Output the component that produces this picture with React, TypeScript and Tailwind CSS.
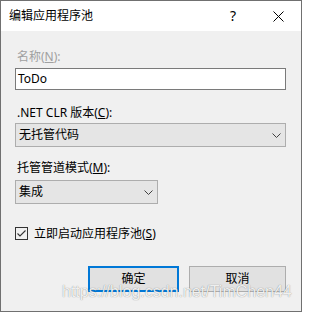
import React from 'react';

const font = "font-['Noto_Sans','Noto_Sans_CJK_SC',sans-serif]";

function Chevron() {
  return (
    <svg width="9" height="5" viewBox="0 0 9 5" className="shrink-0">
      <polyline points="0.5,0.5 4.5,4.5 8.5,0.5" fill="none" stroke="#404040" strokeWidth="1" />
    </svg>
  );
}

function Select({ value, width }: { value: string; width: string }) {
  return (
    <div
      className={`${width} h-[24px] flex items-center justify-between border border-[#adadad] bg-[#e5e5e5] pl-[3px] pr-[4px] text-[12px] leading-[16px] text-black`}
    >
      <span>{value}</span>
      <Chevron />
    </div>
  );
}

export default function App() {
  return (
    <div
      className={`relative flex h-[312px] w-[302px] flex-col border border-[#707070] bg-[#f0f0f0] ${font} text-black`}
    >
      {/* title bar */}
      <div className="flex h-[30px] items-center bg-white pl-[8px] text-[12px] leading-[16px]">
        <span>编辑应用程序池</span>
        <span className="ml-auto mr-[37px] text-[14px] leading-[16px]">?</span>
        <svg width="11" height="11" viewBox="0 0 11 11" className="mr-[17px]">
          <path d="M0.5 0.5 L10.5 10.5 M10.5 0.5 L0.5 10.5" stroke="#000" strokeWidth="1" />
        </svg>
      </div>

      {/* body */}
      <div className="flex flex-1 flex-col pl-[14px] pr-[15px] pt-[18px] text-[12px] leading-[16px]">
        <div className="pl-[2px] text-[#a0a0a0]">
          名称(<span className="underline">N</span>):
        </div>
        <div className="mt-[3px] flex h-[22px] items-center border border-[#7a7a7a] bg-white pl-[2px]">
          ToDo
        </div>

        <div className="mt-[15px] pl-[2px]">
          .NET CLR 版本(<span className="underline">C</span>):
        </div>
        <div className="mt-[2px]">
          <Select value="无托管代码" width="w-full" />
        </div>

        <div className="mt-[13px] pl-[2px]">
          托管管道模式(<span className="underline">M</span>):
        </div>
        <div className="mt-[4px]">
          <Select value="集成" width="w-[143px]" />
        </div>

        <div className="mt-[23px] flex h-[13px] items-center gap-[6px]">
          <div className="flex h-[13px] w-[13px] items-center justify-center border border-[#333333] bg-[#f0f0f0]">
            <svg width="11" height="11" viewBox="0 0 11 11">
              <polyline points="1.5,5.5 4,8 9.5,2.5" fill="none" stroke="#333333" strokeWidth="1.1" />
            </svg>
          </div>
          <span>
            立即启动应用程序池(<span className="underline">S</span>)
          </span>
        </div>

        <div className="mt-[26px] flex justify-end gap-[10px]">
          <button className="h-[26px] w-[91px] border-2 border-[#0078d7] bg-[#e1e1e1] text-[12px] text-black">
            确定
          </button>
          <button className="h-[26px] w-[97px] border border-[#adadad] bg-[#e1e1e1] text-[12px] text-black">
            取消
          </button>
        </div>
      </div>

      {/* watermark */}
      <div className="pointer-events-none absolute left-[61px] top-[281px] font-['Liberation_Sans',sans-serif] text-[16px] leading-[20px] text-[rgba(255,255,255,0.9)] [text-shadow:0_0_1px_rgba(0,0,0,0.5)]">
        https://blog.csdn.net/TimChen44
      </div>
    </div>
  );
}
